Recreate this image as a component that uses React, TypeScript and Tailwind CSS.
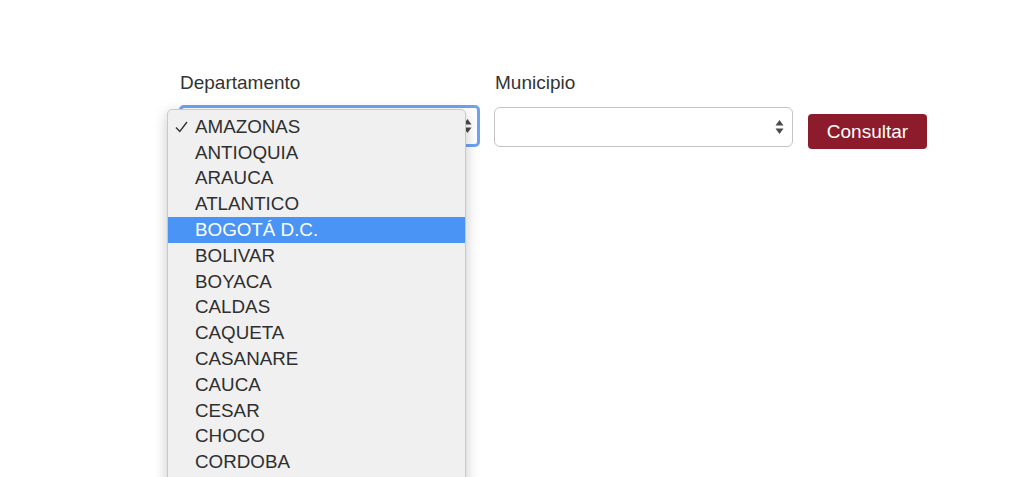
import React from "react";

const items = [
  "AMAZONAS",
  "ANTIOQUIA",
  "ARAUCA",
  "ATLANTICO",
  "BOGOTÁ D.C.",
  "BOLIVAR",
  "BOYACA",
  "CALDAS",
  "CAQUETA",
  "CASANARE",
  "CAUCA",
  "CESAR",
  "CHOCO",
  "CORDOBA",
];

function Arrows() {
  return (
    <svg width="9" height="16" viewBox="0 0 9 16" className="text-[#4a4a4a]">
      <path d="M4.5 1 L8.5 6.5 L0.5 6.5 Z" fill="currentColor" />
      <path d="M4.5 15 L8.5 9.5 L0.5 9.5 Z" fill="currentColor" />
    </svg>
  );
}

export default function App() {
  return (
    <div
      className="w-[1024px] h-[477px] bg-white overflow-hidden relative"
      style={{ fontFamily: '"Liberation Sans", Arial, sans-serif' }}
    >
      <div className="flex items-start pt-[72px] pl-[179px] gap-[14px]">
        <div className="relative flex flex-col w-[301px]">
          <label className="text-[19px] leading-[22px] text-[#333] pl-[1px] mb-[13px]">
            Departamento
          </label>
          <div className="h-[42px] -mt-[2px] rounded-[5px] border-[3px] border-[#6ea2f2] bg-white flex items-center justify-end pr-[5px]">
            <Arrows />
          </div>
          <div className="absolute left-[-12px] top-[37px] w-[299px] h-[420px] bg-[#f0f0f0] border border-[#c9c9c9] rounded-[5px] shadow-[0_4px_14px_rgba(0,0,0,0.22)] pt-[4px] z-10">
            {items.map((it, i) => (
              <div
                key={it}
                className={
                  "h-[25.8px] flex items-center text-[18.8px] " +
                  (i === 4 ? "bg-[#4a94f5] text-white" : "text-[#2f2f2f]")
                }
              >
                <span className="w-[27px] pl-[7px] text-[17px] leading-none">
                  {i === 0 ? (
                    <svg width="13" height="12" viewBox="0 0 13 12">
                      <path d="M1 6.5 L4.8 10.5 L12 1" fill="none" stroke="#333" strokeWidth="1.4" />
                    </svg>
                  ) : null}
                </span>
                <span>{it}</span>
              </div>
            ))}
          </div>
        </div>
        <div className="flex flex-col w-[299px]">
          <label className="text-[19px] leading-[22px] text-[#333] pl-[1px] mb-[13px]">
            Municipio
          </label>
          <div className="h-[40px] rounded-[6px] border border-[#c4c4c4] bg-white flex items-center justify-end pr-[8px]">
            <Arrows />
          </div>
        </div>
        <button className="mt-[42px] ml-[1px] w-[119px] h-[35px] rounded-[4px] bg-[#8c1c2b] text-white text-[19px] leading-none">
          Consultar
        </button>
      </div>
    </div>
  );
}
